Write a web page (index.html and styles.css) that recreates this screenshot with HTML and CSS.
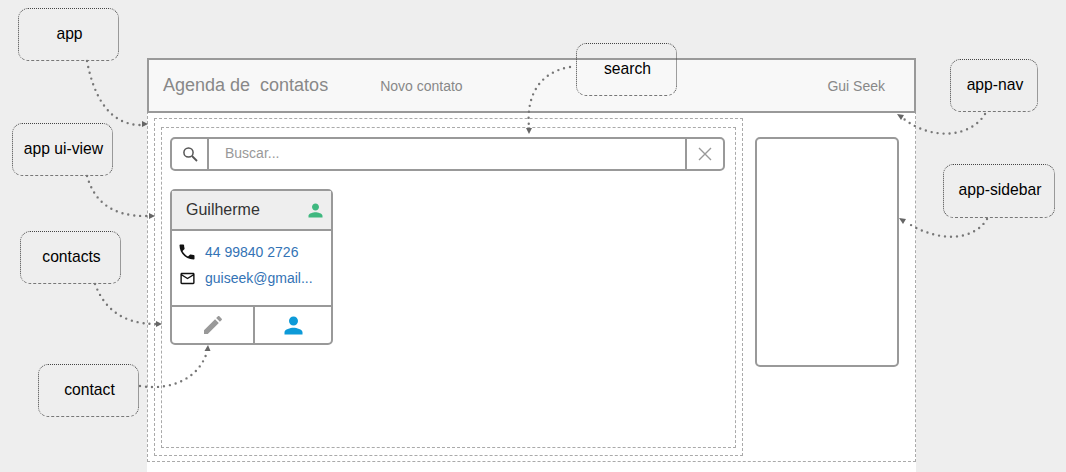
FILE: index.html
```html
<!DOCTYPE html>
<html lang="en">
<head>
  <meta charset="UTF-8">
  <meta name="viewport" content="width=device-width, initial-scale=1.0">
  <title>Agenda de contatos</title>
  <link rel="stylesheet" href="styles.css">
</head>
<body>
  <!-- Page column -->
  <div class="page">
    <div class="navbar">
      <span class="brand">Agenda de&nbsp; contatos</span>
      <a class="nav-link" href="#novo">Novo contato</a>
      <a class="nav-link nav-user" href="#user">Gui Seek</a>
    </div>

    <div class="app">
      <div class="ui-view">
        <div class="contacts">
          <!-- Search -->
          <div class="search">
            <div class="search-icon">
              <svg width="18" height="18" viewBox="0 0 18 18"><circle cx="7.500" cy="7.500" r="4.600" fill="none" stroke="#555" stroke-width="1.500"/><path d="M11 11l5 5" stroke="#555" stroke-width="1.800" fill="none"/></svg>
            </div>
            <div class="search-input">Buscar...</div>
            <div class="search-clear">
              <svg width="14" height="14" viewBox="0 0 14 14"><path d="M1 1l12 12M13 1L1 13" stroke="#999" stroke-width="1.400" fill="none"/></svg>
            </div>
          </div>

          <!-- Contact card -->
          <div class="card">
            <div class="card-head">
              <span>Guilherme</span>
              <svg class="head-icon" width="21" height="21" viewBox="0 0 24 24"><path fill="#3fb87f" d="M12 12c2.210 0 4-1.790 4-4s-1.790-4-4-4-4 1.790-4 4 1.790 4 4 4zm0 2c-2.670 0-8 1.340-8 4v2h16v-2c0-2.660-5.330-4-8-4z"/></svg>
            </div>
            <div class="card-body">
              <div class="card-row">
                <span class="row-icon"><svg width="20" height="20" viewBox="0 0 24 24"><path fill="#111" d="M6.620 10.790c1.440 2.830 3.760 5.140 6.590 6.590l2.200-2.200c.27-.27.67-.36 1.020-.24 1.120.37 2.330.57 3.570.57.55 0 1 .45 1 1V20c0 .55-.45 1-1 1-9.390 0-17-7.610-17-17 0-.55.45-1 1-1h3.500c.55 0 1 .45 1 1 0 1.250.2 2.450.57 3.570.11.35.03.74-.25 1.020l-2.200 2.200z"/></svg></span>
                <a href="#tel">44 99840 2726</a>
              </div>
              <div class="card-row">
                <span class="row-icon"><svg width="17" height="17" viewBox="0 0 24 24"><path fill="#111" d="M20 4H4c-1.100 0-2 .9-2 2v12c0 1.100.9 2 2 2h16c1.100 0 2-.9 2-2V6c0-1.100-.9-2-2-2zm0 14H4V8l8 5 8-5v10zm-8-7L4 6h16l-8 5z"/></svg></span>
                <a href="#mail">guiseek@gmail...</a>
              </div>
            </div>
            <div class="card-foot">
              <div class="foot-cell foot-edit">
                <svg width="24" height="24" viewBox="0 0 24 24"><path fill="#999" d="M3 17.250V21h3.750L17.810 9.940l-3.750-3.750L3 17.250zM20.710 7.040c.39-.39.39-1.020 0-1.410l-2.340-2.340c-.39-.39-1.020-.39-1.410 0l-1.830 1.830 3.750 3.750 1.830-1.830z"/></svg>
              </div>
              <div class="foot-cell">
                <svg width="27" height="27" viewBox="0 0 24 24"><path fill="#0d9ad8" d="M12 12c2.210 0 4-1.790 4-4s-1.790-4-4-4-4 1.790-4 4 1.790 4 4 4zm0 2c-2.670 0-8 1.340-8 4v2h16v-2c0-2.660-5.330-4-8-4z"/></svg>
              </div>
            </div>
          </div>
        </div>
      </div>
      <div class="sidebar"></div>
    </div>
  </div>

  <!-- Diagram notes -->
  <div class="note note-app">app</div>
  <div class="note note-view">app ui-view</div>
  <div class="note note-contacts">contacts</div>
  <div class="note note-contact">contact</div>
  <div class="note note-search">search</div>
  <div class="note note-nav">app-nav</div>
  <div class="note note-sidebar">app-sidebar</div>

  <svg class="arrows" width="1066" height="472" viewBox="0 0 1066 472">
    <g class="arrow-line">
      <path d="M87 61C94 98 110 125 141 125"/>
      <path d="M87 176C94 200 110 217 149 216"/>
      <path d="M95 284C104 308 122 324 156 324"/>
      <path d="M140 386C172 391 199 378 207 352"/>
      <path d="M570 67C540 72 526 95 529 127"/>
      <path d="M985 114C972 136 934 142 904 119"/>
      <path d="M987 219C974 241 938 243 906 222"/>
    </g>
    <g class="arrow-head">
      <path d="M148 124l-6-3v6z"/>
      <path d="M155 216l-6-3v6z"/>
      <path d="M162 324l-6-3v6z"/>
      <path d="M208 345l-3.500 6h6z"/>
      <path d="M529 134l-3-6h6z"/>
      <path d="M897 114l7 1-3 5z"/>
      <path d="M899 218l7 1-3 5z"/>
    </g>
  </svg>
</body>
</html>
```

FILE: styles.css
```css
/* General Styling */
body {
  position: relative;
  box-sizing: border-box;
  margin: 0;
  padding-top: 58px;
  height: 472px;
  overflow: hidden;
  background: #eee;
  font-family: "Liberation Sans", Arial, sans-serif;
  font-size: 14px;
  color: #333;
}

a {
  color: #3373b5;
  text-decoration: none;
}

/* Page column */
.page {
  width: 769px;
  height: 414px;
  margin-left: 147px;
  background: #fff;
}

/* Navbar */
.navbar {
  position: relative;
  z-index: 1;
  display: flex;
  align-items: center;
  box-sizing: border-box;
  height: 55px;
  padding: 0 29px 0 14px;
  background: #f8f8f8;
  border: 2px solid #999;
}

.brand {
  font-size: 18px;
  color: #888;
}

.nav-link {
  margin-left: 52px;
  color: #888;
}

.nav-user {
  margin-left: auto;
}

/* Nested boxes */
.app {
  display: flex;
  align-items: flex-start;
  gap: 12px;
  box-sizing: border-box;
  height: 351px;
  margin-top: -2px;
  padding: 6px 6px 5px;
  border: 1px dashed #aaa;
}

.ui-view {
  box-sizing: border-box;
  width: 589px;
  height: 338px;
  padding: 8px 6px;
  border: 1px dashed #aaa;
}

.contacts {
  box-sizing: border-box;
  height: 321px;
  padding: 9px 10px 9px 8px;
  border: 1px dashed #aaa;
}

.sidebar {
  box-sizing: border-box;
  width: 144px;
  height: 230px;
  margin-top: 19px;
  border: 2px solid #999;
  border-radius: 5px;
}

/* Search */
.search {
  display: flex;
  box-sizing: border-box;
  height: 34px;
  border: 2px solid #999;
  border-radius: 5px;
}

.search-icon {
  display: flex;
  align-items: center;
  justify-content: center;
  width: 35px;
  border-right: 2px solid #999;
}

.search-input {
  flex: 1;
  padding-left: 16px;
  line-height: 29px;
  color: #999;
}

.search-clear {
  display: flex;
  align-items: center;
  justify-content: center;
  width: 36px;
  border-left: 2px solid #999;
}

/* Contact card */
.card {
  box-sizing: border-box;
  width: 163px;
  height: 156px;
  margin-top: 18px;
  border: 2px solid #999;
  border-radius: 5px;
}

.card-head {
  display: flex;
  align-items: center;
  justify-content: space-between;
  box-sizing: border-box;
  height: 40px;
  padding: 0 5px 0 14px;
  background: #eee;
  border-bottom: 2px solid #999;
  font-size: 16px;
}

.card-body {
  box-sizing: border-box;
  height: 74px;
  padding-top: 8px;
}

.card-row {
  display: flex;
  align-items: center;
  gap: 8px;
  height: 26px;
  padding-left: 5px;
}

.row-icon {
  display: flex;
  align-items: center;
  justify-content: center;
  width: 20px;
}

.card-foot {
  display: flex;
  height: 36px;
  border-top: 2px solid #999;
}

.foot-cell {
  display: flex;
  align-items: center;
  justify-content: center;
  flex: 1;
}

.foot-edit {
  flex: none;
  width: 81px;
  border-right: 2px solid #999;
}

/* Diagram notes */
.note {
  position: absolute;
  z-index: 2;
  display: flex;
  align-items: center;
  justify-content: center;
  box-sizing: border-box;
  height: 53px;
  padding: 0 0 2px 2px;
  border: 1px dotted #444;
  border-bottom: 1px dashed #777;
  border-radius: 10px;
  font-size: 15.700px;
  color: #000;
}

.note-app { left: 18px; top: 8px; width: 101px; }
.note-view { left: 12px; top: 123px; width: 101px; }
.note-contacts { left: 20px; top: 231px; width: 101px; }
.note-contact { left: 38px; top: 364px; width: 101px; }
.note-search { left: 576px; top: 43px; width: 101px; padding: 16px 0 0 2px; align-items: flex-start; }
.note-nav { left: 950px; top: 59px; width: 88px; }
.note-sidebar { left: 943px; top: 164px; width: 112px; height: 54px; }

/* Arrows */
.arrows {
  position: absolute;
  z-index: 2;
  left: 0;
  top: 0;
}

.arrow-line path {
  fill: none;
  stroke: #777;
  stroke-width: 2.400;
  stroke-linecap: round;
  stroke-dasharray: 0 6;
}

.arrow-head path {
  fill: #666;
}
```
